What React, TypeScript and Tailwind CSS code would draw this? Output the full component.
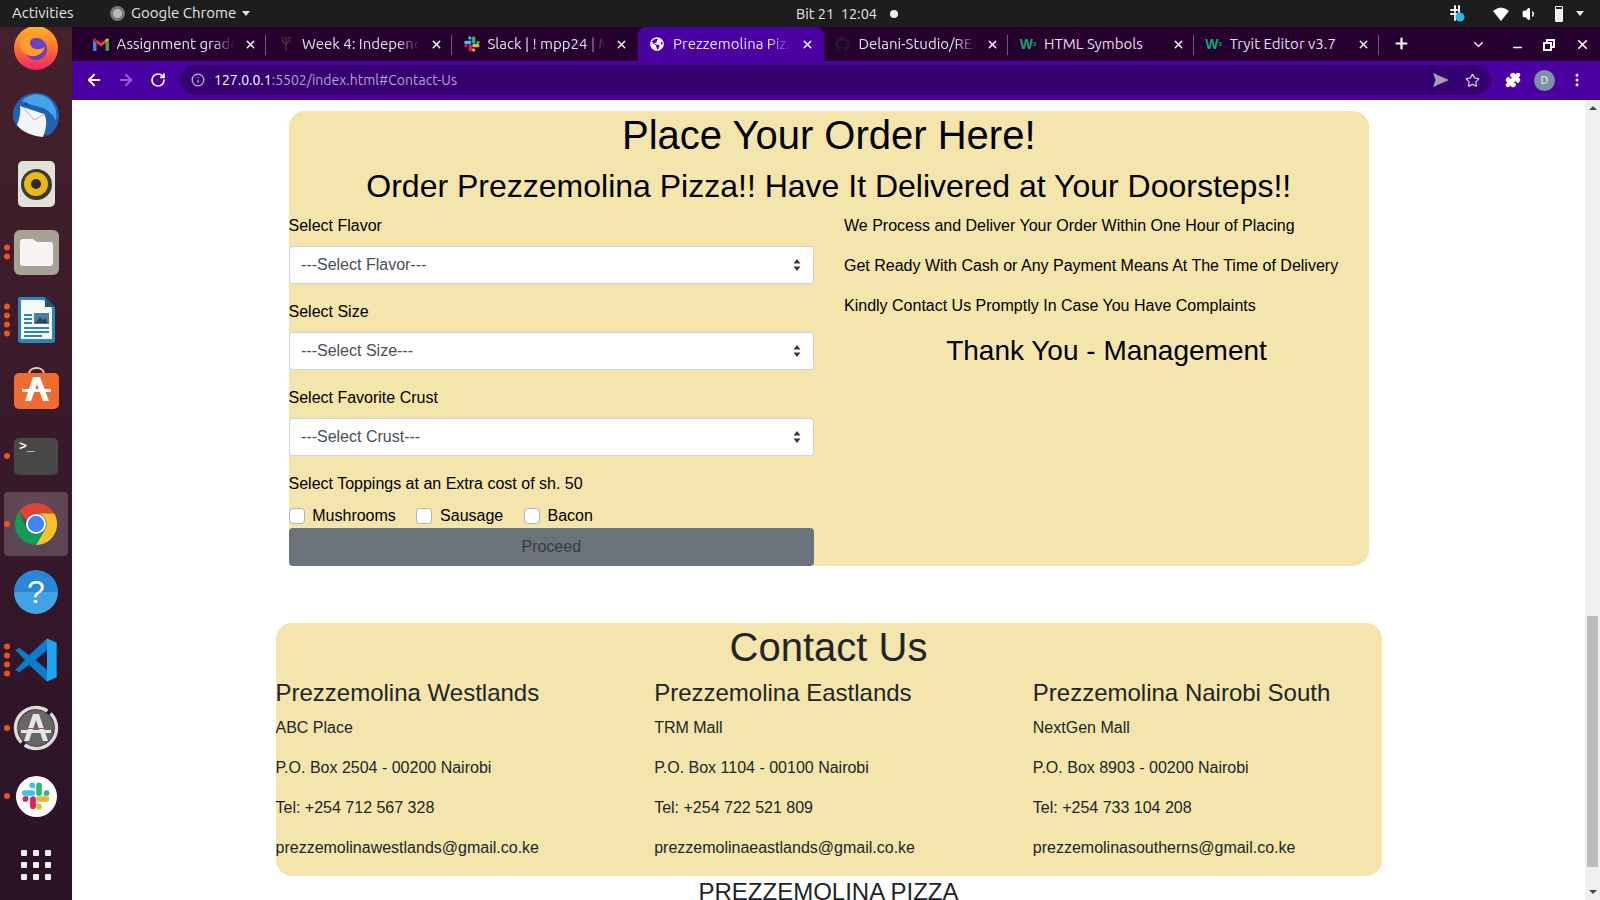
import { ChevronDown, Minus, Plus, X, ArrowLeft, ArrowRight, RotateCw, Info, Star, Puzzle, EllipsisVertical, Volume1 } from 'lucide-react'
import { FaGithub, FaGlobeAmericas } from 'react-icons/fa'

const uiFont = "font-['Ubuntu','Noto_Sans',Roboto,sans-serif]"

function DotsLeft({ n }: { n: number }) {
  return (
    <div className="absolute left-0 top-1/2 flex -translate-y-1/2 flex-col gap-[3px]">
      {Array.from({ length: n }).map((_, i) => <span key={i} className="h-[6px] w-[6px] rounded-full bg-[#e95420]" />)}
    </div>
  )
}

function DockItem({ dots = 0, active, children }: { dots?: number; active?: boolean; children: React.ReactNode }) {
  return (
    <div className={`relative flex h-[64px] w-[64px] items-center justify-center rounded-[4px] ${active ? 'bg-white/20' : ''}`}>
      {children}
      {dots > 0 && <DotsLeft n={dots} />}
    </div>
  )
}

function Firefox() {
  return (
    <svg width="46" height="46" viewBox="0 0 46 46">
      <defs>
        <linearGradient id="ff" x1="0" y1="0" x2="0" y2="1">
          <stop offset="0" stopColor="#ffb52e" />
          <stop offset="0.55" stopColor="#ff6a2b" />
          <stop offset="1" stopColor="#f0246e" />
        </linearGradient>
      </defs>
      <circle cx="23" cy="23" r="22" fill="url(#ff)" />
      <circle cx="23" cy="24" r="11" fill="#6a3fc4" />
      <path d="M7 14c6-7 14-6 20-2-6 0-10 2-10 6 0 6 9 8 15 4-2 8-12 12-19 7C8 26 5 20 7 14z" fill="#ff9a2e" />
    </svg>
  )
}

function Thunderbird() {
  return (
    <svg width="48" height="48" viewBox="0 0 48 48">
      <path d="M24 1c13 0 23 10 23 23 0 9-5 17-12 20l-8-4L5 34C2 30 1 27 1 24 1 11 11 1 24 1z" fill="#1d62b5" />
      <path d="M10 9c5-6 16-9 24-4 8 5 12 14 10 24-3-7-8-11-13-13L17 12z" fill="#46a3e6" />
      <path d="M8 14l24 8c4 6 2 16-1 23C20 44 10 40 5 33c2-5 4-12 3-19z" fill="#f4f5f6" />
      <path d="M11 15l11 13 11-6" fill="none" stroke="#aeb8c4" strokeWidth="1" />
      <circle cx="14" cy="12" r="1.500" fill="#123a6b" />
    </svg>
  )
}

function Rhythmbox() {
  return (
    <div className="flex h-[46px] w-[37px] items-center justify-center rounded-[5px] bg-[#e4e1d8]">
      <div className="flex h-[31px] w-[31px] items-center justify-center rounded-full bg-[#3a3a38]">
        <div className="flex h-[24px] w-[24px] items-center justify-center rounded-full bg-[#eab817]">
          <div className="h-[10px] w-[10px] rounded-full bg-[#2c2c2a]" />
        </div>
      </div>
    </div>
  )
}

function Files() {
  return (
    <div className="flex h-[45px] w-[45px] items-center justify-center rounded-[6px] bg-[#a8a294]">
      <svg width="33" height="27" viewBox="0 0 33 27">
        <path d="M3 0h10l4 3h13a3 3 0 0 1 3 3v18a3 3 0 0 1-3 3H3a3 3 0 0 1-3-3V3a3 3 0 0 1 3-3z" fill="#f6f5f3" />
      </svg>
    </div>
  )
}

function Writer() {
  return (
    <svg width="37" height="46" viewBox="0 0 37 46">
      <path d="M2 0h25l10 10v33a3 3 0 0 1-3 3H3a3 3 0 0 1-3-3V2a2 2 0 0 1 2-2z" fill="#2b85b5" />
      <path d="M3 3h23l8 8v31H3z" fill="#f6f8f9" />
      <path d="M27 0l10 10H27z" fill="#16587e" />
      <rect x="6" y="17" width="8" height="2" fill="#2b85b5" /><rect x="6" y="21" width="8" height="2" fill="#2b85b5" /><rect x="6" y="25" width="8" height="2" fill="#2b85b5" />
      <rect x="16" y="16" width="15" height="11" fill="#4a7fa0" /><path d="M17 26l5-6 3 3 2-2 3 5z" fill="#33434f" />
      <rect x="6" y="30" width="25" height="2" fill="#2b85b5" /><rect x="6" y="34" width="25" height="2" fill="#2b85b5" /><rect x="6" y="38" width="18" height="2" fill="#2b85b5" />
    </svg>
  )
}

function Software() {
  return (
    <svg width="45" height="42" viewBox="0 0 45 42">
      <path d="M15 7c0-8 15-8 15 0" fill="none" stroke="#f4c9a8" strokeWidth="2" />
      <rect y="6" width="45" height="36" rx="5" fill="#ee6c31" />
      <path d="M19 10h7l9 24h-6l-6-17-6 17h-6z" fill="#fff" />
      <rect x="8" y="22" width="29" height="3" fill="#fff" />
    </svg>
  )
}

function Terminal() {
  return (
    <div className="relative h-[37px] w-[44px] rounded-[5px] bg-[#484846] font-['Liberation_Mono',monospace] text-[13px] font-bold leading-[14px] text-white">
      <span className="absolute left-[5px] top-[2px]">&gt;_</span>
    </div>
  )
}

function Chrome({ size = 46 }: { size?: number }) {
  return (
    <svg width={size} height={size} viewBox="0 0 48 48">
      <path d="M24 2a22 22 0 0 1 19.05 11H24a11 11 0 0 0-10.2 6.9L6.2 10.8A22 22 0 0 1 24 2z" fill="#db4437" />
      <path d="M43.05 13A22 22 0 0 1 24 46l9.5-16.5A11 11 0 0 0 33.5 18.5 11 11 0 0 0 24 13z" fill="#fbc02d" />
      <path d="M24 46A22 22 0 0 1 6.2 10.8l8.3 18.7A11 11 0 0 0 33.5 29.5z" fill="#0f9d58" />
      <circle cx="24" cy="24" r="10.500" fill="#fff" />
      <circle cx="24" cy="24" r="8.500" fill="#4285f4" />
    </svg>
  )
}

function Help() {
  return (
    <div className="flex h-[44px] w-[44px] items-center justify-center rounded-full bg-[linear-gradient(#2a86d8_50%,#43a3e6_50%)] font-['Liberation_Sans',sans-serif] text-[32px] leading-none text-white">?</div>
  )
}

function VSCode() {
  return (
    <svg width="44" height="44" viewBox="0 0 100 100">
      <path fillRule="evenodd" d="M75 1 34 39 12 22 3 27l22 23L3 73l9 5 22-17 41 38zM75 28 49 50l26 22z" fill="#0a7cc9" />
      <path d="M75 1l22 10v78L75 99z" fill="#1fa4f0" />
    </svg>
  )
}

function Updater() {
  return (
    <svg width="46" height="46" viewBox="0 0 46 46">
      <circle cx="23" cy="23" r="18" fill="#666" />
      <circle cx="23" cy="23" r="20.500" fill="none" stroke="#dcdcdc" strokeWidth="3.500" strokeDasharray="44 4 60 4" />
      <path d="M20 9h6l9 27h-5L23 15l-7 21h-5z" fill="#e6e6e6" />
      <rect x="8" y="25" width="30" height="3" fill="#e6e6e6" />
      <rect x="13" y="23" width="20" height="1" fill="#a04a90" />
    </svg>
  )
}

function Slack({ size = 30 }: { size?: number }) {
  return (
    <svg width={size} height={size} viewBox="0 0 54 54" fill="none">
      <path d="M19.700 1a5.500 5.500 0 0 0 0 11h5.500V6.500A5.500 5.500 0 0 0 19.700 1zm0 14.700H5.500a5.500 5.500 0 0 0 0 11h14.200a5.500 5.500 0 0 0 0-11z" fill="#36c5f0" />
      <path d="M53 21.200a5.500 5.500 0 0 0-11 0v5.500h5.500a5.500 5.500 0 0 0 5.500-5.500zm-14.700 0V6.500a5.500 5.500 0 0 0-11 0v14.700a5.500 5.500 0 0 0 11 0z" fill="#2eb67d" />
      <path d="M32.800 53a5.500 5.500 0 0 0 0-11h-5.500v5.500a5.500 5.500 0 0 0 5.500 5.500zm0-14.700H47a5.500 5.500 0 0 0 0-11H32.800a5.500 5.500 0 0 0 0 11z" fill="#ecb22e" />
      <path d="M1 32.800a5.500 5.500 0 0 0 11 0v-5.500H6.500A5.500 5.500 0 0 0 1 32.800zm14.700 0V47a5.500 5.500 0 0 0 11 0V32.800a5.500 5.500 0 0 0-11 0z" fill="#e01e5a" />
    </svg>
  )
}

function TraySlack() {
  return (
    <svg width="15" height="18" viewBox="0 0 15 18">
      <path d="M5 1v6M9 1v6M1 5h6M1 9h6M5 9v6M9 9v3" stroke="#f0f0f0" strokeWidth="2" strokeLinecap="round" />
      <circle cx="10" cy="12" r="4.500" fill="#29b6e8" />
    </svg>
  )
}

function Dock() {
  return (
    <aside className="flex w-[72px] shrink-0 flex-col items-center overflow-hidden bg-[linear-gradient(#45202c,#2a1227)]">
      <div className="-mt-[11px] flex flex-col items-center gap-[4px]">
        <DockItem><Firefox /></DockItem>
        <DockItem><Thunderbird /></DockItem>
        <DockItem><Rhythmbox /></DockItem>
        <DockItem dots={2}><Files /></DockItem>
        <DockItem dots={4}><Writer /></DockItem>
        <DockItem><Software /></DockItem>
        <DockItem dots={1}><Terminal /></DockItem>
        <DockItem dots={1} active><Chrome /></DockItem>
        <DockItem><Help /></DockItem>
        <DockItem dots={4}><VSCode /></DockItem>
        <DockItem dots={1}><Updater /></DockItem>
        <DockItem dots={1}>
          <div className="flex h-[41px] w-[41px] items-center justify-center rounded-full bg-white"><Slack size={28} /></div>
        </DockItem>
        <div className="mt-[18px] grid grid-cols-3 gap-[6px]">
          {Array.from({ length: 9 }).map((_, i) => <span key={i} className="h-[6px] w-[6px] rounded-[1px] bg-[#eeeeec]" />)}
        </div>
      </div>
    </aside>
  )
}

function GmailIcon() {
  return (
    <svg width="16" height="13" viewBox="0 0 16 13">
      <path d="M0 2v10a1 1 0 0 0 1 1h2.500V5z" fill="#4285f4" />
      <path d="M16 2v10a1 1 0 0 1-1 1h-2.500V5z" fill="#34a853" />
      <path d="M3.500 5 8 8.500 12.500 5V1.500L8 5 3.500 1.500z" fill="#ea4335" />
      <path d="M0 2c0-1.500 2-2.500 3.500-.5V5L0 2z" fill="#c5221f" />
      <path d="M16 2c0-1.500-2-2.500-3.500-.5V5L16 2z" fill="#fbbc04" />
    </svg>
  )
}

function W3Icon() {
  return <span className="font-['Liberation_Sans',sans-serif] text-[14px] font-bold leading-none text-[#04aa6d]">W<sup className="text-[6px]">3</sup></span>
}

function TreeIcon() {
  return (
    <svg width="14" height="16" viewBox="0 0 14 16">
      <path d="M7 15V7M7 9 3 4M7 8l4-4M7 6V1M5 3 3 1M9 3l2-2" stroke="#4a3a38" strokeWidth="1.300" fill="none" />
    </svg>
  )
}

function Tab({ icon, title, active, sep = true, fade = true }: { icon: React.ReactNode; title: string; active?: boolean; sep?: boolean; fade?: boolean }) {
  return (
    <div className={`relative flex h-[34px] w-[185.5px] shrink-0 items-center pl-[11px] pr-[10px] ${active ? 'rounded-t-[8px] bg-[#4b00a2]' : ''}`}>
      <span className="flex w-[16px] shrink-0 justify-center">{icon}</span>
      <span className={`ml-[8px] w-[120px] overflow-hidden text-[15px] whitespace-nowrap text-[#e8dff0] ${fade ? '[mask-image:linear-gradient(90deg,#000_80%,transparent_98%)]' : ''}`}>{title}</span>
      <X size={13} strokeWidth={2.5} className="ml-auto shrink-0 text-white" />
      {sep && <span className="absolute right-[1px] top-[8px] h-[20px] w-px bg-[#6b5a78]" />}
    </div>
  )
}

function BrowserChrome() {
  return (
    <div className={`shrink-0 ${uiFont}`}>
      <div className="flex h-[34px] items-end bg-[#26002f] pl-[9.5px] text-white">
        <Tab icon={<GmailIcon />} title="Assignment grade" />
        <Tab icon={<TreeIcon />} title="Week 4: Independ" />
        <Tab icon={<Slack size={16} />} title="Slack | ! mpp24 | M" sep={false} />
        <Tab active icon={<FaGlobeAmericas size={14} className="text-white" />} title="Prezzemolina Pizz" sep={false} />
        <Tab icon={<FaGithub size={15} className="text-[#1d1d25]" />} title="Delani-Studio/REA" />
        <Tab icon={<W3Icon />} title="HTML Symbols" fade={false} />
        <Tab icon={<W3Icon />} title="Tryit Editor v3.7" fade={false} />
        <Plus size={17} strokeWidth={3} className="ml-[12.5px] mb-[9px] shrink-0" />
        <ChevronDown size={15} strokeWidth={2.5} className="mb-[9px] ml-auto text-[#d9d0e0]" />
        <Minus size={13} strokeWidth={3} className="mb-[7px] ml-[24.5px]" />
        <svg width="12" height="12" viewBox="0 0 12 12" className="mb-[10px] ml-[19px]">
          <path d="M3 0h9v9H9v3H0V3h3zM5 2v1h4v4h1V2zM2 5v5h5V5z" fill="#fff" fillRule="evenodd" />
        </svg>
        <X size={15} strokeWidth={2.5} className="mb-[9px] ml-[20px] mr-[10.5px]" />
      </div>
      <div className="flex h-[39px] items-center bg-[#4b00a2] pb-[1px] pl-[13px]">
        <ArrowLeft size={18} strokeWidth={2.5} className="text-white" />
        <ArrowRight size={18} strokeWidth={2.5} className="ml-[14px] text-[#8f62c9]" />
        <RotateCw size={16} strokeWidth={2.5} className="ml-[15px] text-white" />
        <div className="ml-[14px] flex h-[30px] w-[1311px] items-center rounded-full bg-[#35006f] pl-[11px]">
          <Info size={14} className="text-[#c9bcd9]" />
          <span className="ml-[9px] text-[14px] text-[#b5a0d0]"><span className="text-white">127.0.0.1</span>:5502/index.html#Contact-Us</span>
          <svg width="16" height="14" viewBox="0 0 16 14" className="ml-auto">
            <path d="M0 0l16 7-16 7 2.500-7z" fill="#a99bb9" />
          </svg>
          <Star size={15} strokeWidth={2} className="ml-[16px] mr-[11px] text-[#d3cadf]" />
        </div>
        <Puzzle size={16} className="ml-[14px] fill-white text-white" />
        <span className="ml-[13px] flex h-[21px] w-[21px] items-center justify-center rounded-full bg-[#7a92a8] text-[11px] text-white">D</span>
        <EllipsisVertical size={16} strokeWidth={2.5} className="ml-[14px] text-white" />
      </div>
    </div>
  )
}

function FakeSelect({ label }: { label: string }) {
  return (
    <div className="flex h-[38px] items-center justify-between rounded-[4px] border border-[#ced4da] bg-white pl-[11.5px] pr-[12.5px] text-[#495057]">
      {label}
      <svg width="8" height="12" viewBox="0 0 8 12"><path d="M4 0l3.500 4.500h-7zM4 12 .5 7.500h7z" fill="#343a40" /></svg>
    </div>
  )
}

function FormGroup({ label, placeholder }: { label: string; placeholder: string }) {
  return (
    <div className="mb-[16px]">
      <div className="mb-[8px] leading-[24px]">{label}</div>
      <FakeSelect label={placeholder} />
    </div>
  )
}

function Topping({ label }: { label: string }) {
  return (
    <div className="mr-[20.5px] flex items-center">
      <span className="mr-[7.75px] h-[16px] w-[16px] rounded-[4px] border border-[#adb5bd] bg-white" />
      {label}
    </div>
  )
}

function Branch({ name, place, box, tel, email }: { name: string; place: string; box: string; tel: string; email: string }) {
  return (
    <div>
      <h3 className="mb-[9px] -mt-[1px] text-[24px] leading-[29px] text-[#212529]">{name}</h3>
      <p className="mb-[16px] leading-[24px]">{place}</p>
      <p className="mb-[16px] leading-[24px]">{box}</p>
      <p className="mb-[16px] leading-[24px]">{tel}</p>
      <p className="leading-[24px]">{email}</p>
    </div>
  )
}

function PageBody() {
  return (
    <main className="relative h-full min-w-0 flex-1 overflow-hidden bg-white font-['Liberation_Sans',Arial,sans-serif] text-[16px] text-[#212529]">
      <section className="ml-[216.5px] mt-[11px] h-[455px] w-[1080.5px] rounded-[16px] bg-[#f3e5ab]">
        <h1 className="text-center text-[40px] leading-[48px] text-black">Place Your Order Here!</h1>
        <h2 className="mt-[8px] text-center text-[32px] leading-[38px] text-black">Order Prezzemolina Pizza!! Have It Delivered at Your Doorsteps!!</h2>
        <div className="mt-[9px] flex text-black">
          <div className="w-[525.5px]">
            <FormGroup label="Select Flavor" placeholder="---Select Flavor---" />
            <FormGroup label="Select Size" placeholder="---Select Size---" />
            <FormGroup label="Select Favorite Crust" placeholder="---Select Crust---" />
            <div className="mb-[8px] leading-[24px]">Select Toppings at an Extra cost of sh. 50</div>
            <div className="flex h-[24px] items-center">
              <Topping label="Mushrooms" />
              <Topping label="Sausage" />
              <Topping label="Bacon" />
            </div>
            <div className="flex h-[38px] items-center justify-center rounded-[4px] bg-[#6c727c] text-[#343a40]">Proceed</div>
          </div>
          <div className="ml-[30px] w-[525px]">
            <p className="mb-[16px] leading-[24px]">We Process and Deliver Your Order Within One Hour of Placing</p>
            <p className="mb-[16px] leading-[24px]">Get Ready With Cash or Any Payment Means At The Time of Delivery</p>
            <p className="mb-[16px] leading-[24px]">Kindly Contact Us Promptly In Case You Have Complaints</p>
            <h3 className="text-center text-[28px] leading-[34px]">Thank You - Management</h3>
          </div>
        </div>
      </section>
      <section className="ml-[203.5px] mt-[57px] h-[253px] w-[1106px] rounded-[16px] bg-[#f3e5ab]">
        <h2 className="text-center text-[40px] leading-[48px]">Contact Us</h2>
        <div className="mt-[8px] grid grid-cols-[378.67px_378.67px_1fr]">
          <Branch name="Prezzemolina Westlands" place="ABC Place" box="P.O. Box 2504 - 00200 Nairobi" tel="Tel: +254 712 567 328" email="prezzemolinawestlands@gmail.co.ke" />
          <Branch name="Prezzemolina Eastlands" place="TRM Mall" box="P.O. Box 1104 - 00100 Nairobi" tel="Tel: +254 722 521 809" email="prezzemolinaeastlands@gmail.co.ke" />
          <Branch name="Prezzemolina Nairobi South" place="NextGen Mall" box="P.O. Box 8903 - 00200 Nairobi" tel="Tel: +254 733 104 208" email="prezzemolinasoutherns@gmail.co.ke" />
        </div>
      </section>
      <div className="ml-[203.5px] mt-[1px] w-[1106px] text-center text-[24px] leading-[29px]">PREZZEMOLINA PIZZA</div>
    </main>
  )
}

function Scrollbar() {
  return (
    <div className="flex w-[15px] shrink-0 flex-col items-center bg-[#efefef]">
      <span className="mt-[6px] h-0 w-0 border-x-[4px] border-b-[4px] border-x-transparent border-b-[#444]" />
      <div className="mt-[506px] h-[251px] w-[11px] bg-[#bdbdbd]" />
      <span className="mt-auto mb-[6px] h-0 w-0 border-x-[4px] border-t-[4px] border-x-transparent border-t-[#444]" />
    </div>
  )
}

function TopBar() {
  return (
    <header className={`relative flex h-[27px] shrink-0 items-center bg-[#1d1d1d] text-[15px] text-[#e6e6e6] ${uiFont}`}>
      <span className="ml-[12px]">Activities</span>
      <span className="ml-[36px] flex items-center">
        <span className="mr-[6.5px] h-[15px] w-[15px] rounded-full border-[3px] border-[#777] bg-[#bbb]" />
        Google Chrome
        <span className="ml-[6px] h-0 w-0 border-x-[4.5px] border-t-[5px] border-x-transparent border-t-[#e6e6e6]" />
      </span>
      <div className="absolute left-[796px] flex items-center text-[14.5px]">
        Bit 21&nbsp;&nbsp;12:04
        <span className="ml-[13px] h-[8px] w-[8px] rounded-full bg-[#eee]" />
      </div>
      <div className="ml-auto mr-[16px] flex items-center">
        <TraySlack />
        <svg width="16" height="14" viewBox="0 0 16 14" className="ml-[28px]"><path d="M8 14 0 4q8-7 16 0z" fill="#fff" /></svg>
        <Volume1 size={16} className="ml-[13px] fill-white text-white" />
        <span className="ml-[17px] h-[16px] w-[8px] rounded-[1px] border border-white bg-[linear-gradient(transparent_15%,#eee_15%)]" />
        <span className="ml-[13.5px] h-0 w-0 border-x-[4.5px] border-t-[5px] border-x-transparent border-t-[#e6e6e6]" />
      </div>
    </header>
  )
}

export default function App() {
  return (
    <div className="flex h-[900px] w-[1600px] flex-col overflow-hidden">
      <TopBar />
      <div className="flex min-h-0 flex-1">
        <Dock />
        <div className="flex min-w-0 flex-1 flex-col">
          <BrowserChrome />
          <div className="flex min-h-0 flex-1">
            <PageBody />
            <Scrollbar />
          </div>
        </div>
      </div>
    </div>
  )
}
